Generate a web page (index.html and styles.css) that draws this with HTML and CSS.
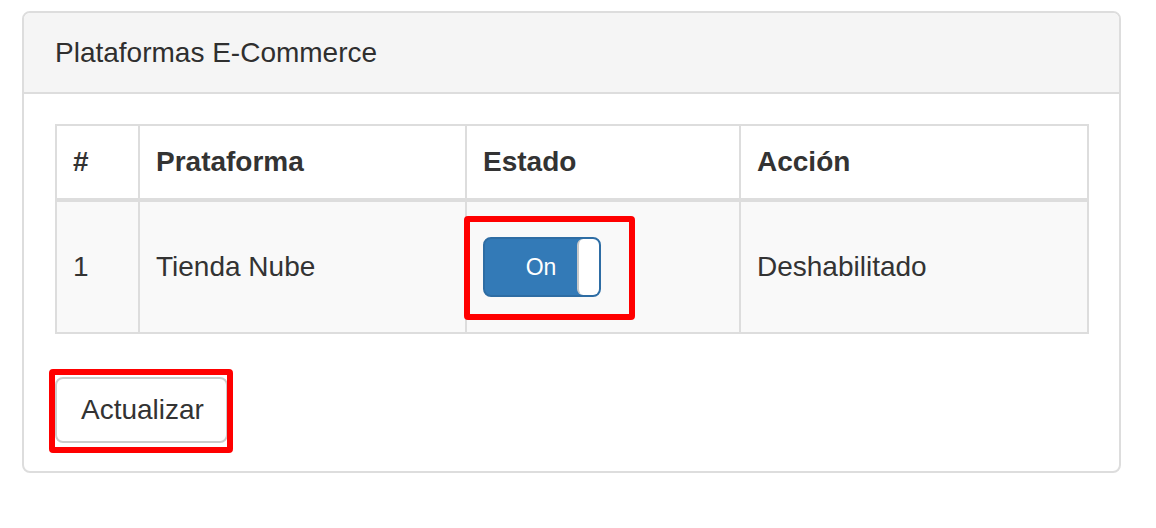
FILE: index.html
```html
<!DOCTYPE html>
<html lang="es">
<head>
<meta charset="utf-8">
<title>Plataformas E-Commerce</title>
<link rel="stylesheet" href="styles.css">
</head>
<body>
<div class="page">
  <section class="panel">
    <header class="panel-heading">Plataformas E-Commerce</header>
    <div class="panel-body">
      <table class="table">
        <thead>
          <tr>
            <th class="col-num">#</th>
            <th class="col-plat">Prataforma</th>
            <th class="col-state">Estado</th>
            <th>Acción</th>
          </tr>
        </thead>
        <tbody>
          <tr>
            <td>1</td>
            <td>Tienda Nube</td>
            <td>
              <div class="toggle-wrap">
                <div class="toggle">
                  <span class="toggle-on">On</span>
                  <span class="toggle-handle"></span>
                  <span class="mark mark-toggle"></span>
                </div>
              </div>
            </td>
            <td>Deshabilitado</td>
          </tr>
        </tbody>
      </table>
      <div class="btn-wrap">
        <button class="btn" type="button">Actualizar</button>
        <span class="mark mark-btn"></span>
      </div>
    </div>
  </section>
</div>
</body>
</html>
```
FILE: styles.css
```css
* { box-sizing: border-box; }

html, body {
  margin: 0;
  padding: 0;
  background: #fff;
}

body {
  font-family: "Liberation Sans", Arial, Helvetica, sans-serif;
  font-size: 28px;
  line-height: 40px;
  color: #333;
}

.page {
  padding: 11px 0 0 22px;
}

.panel {
  width: 1099px;
  border: 2px solid #ddd;
  border-radius: 8px;
  background: #fff;
  overflow: hidden;
}

.panel-heading {
  background: #f5f5f5;
  border-bottom: 2px solid #ddd;
  padding: 20px 31px;
  line-height: 39px;
  color: #2f2f2f;
}

.panel-body {
  padding: 30px 30px 28px 31px;
}

.table {
  width: 100%;
  table-layout: fixed;
  border-collapse: separate;
  border-spacing: 0;
  border-right: 2px solid #ddd;
  border-bottom: 2px solid #ddd;
  margin-bottom: 43px;
}

.table th,
.table td {
  text-align: left;
  padding: 16px 16px 16px 16px;
  border-left: 2px solid #ddd;
  vertical-align: middle;
}

.table th {
  font-weight: bold;
  border-top: 2px solid #ddd;
  border-bottom: 4px solid #ddd;
  background: #fff;
}

.table td {
  background: #f9f9f9;
}

.col-num { width: 83px; }
.col-plat { width: 327px; }
.col-state { width: 274px; }

.toggle-wrap {
  padding: 19px 0;
}

.toggle {
  position: relative;
  display: flex;
  width: 118px;
  height: 60px;
  background: #337ab7;
  border: 2px solid #2e6da4;
  border-radius: 8px;
}

.toggle-on {
  flex: 1;
  color: #fff;
  font-size: 23px;
  line-height: 56px;
  text-align: center;
  padding-left: 20px;
}

.toggle-handle {
  width: 22px;
  height: 56px;
  background: #fff;
  border-left: 2px solid #c9c9c9;
  border-radius: 6px;
}

.btn-wrap {
  position: relative;
  display: inline-block;
}

.btn {
  display: block;
  height: 66px;
  padding: 0 22px 0 24px;
  font-family: "Liberation Sans", Arial, Helvetica, sans-serif;
  font-size: 28px;
  color: #333;
  background: #fff;
  border: 2px solid #ccc;
  border-radius: 8px;
}

.mark {
  position: absolute;
  border: 6px solid #ff0000;
  border-radius: 4px;
  pointer-events: none;
}

.mark-toggle {
  left: -21px;
  top: -23px;
  width: 171px;
  height: 104px;
}

.mark-btn {
  left: -6px;
  top: -8px;
  width: 184px;
  height: 84px;
}
```
